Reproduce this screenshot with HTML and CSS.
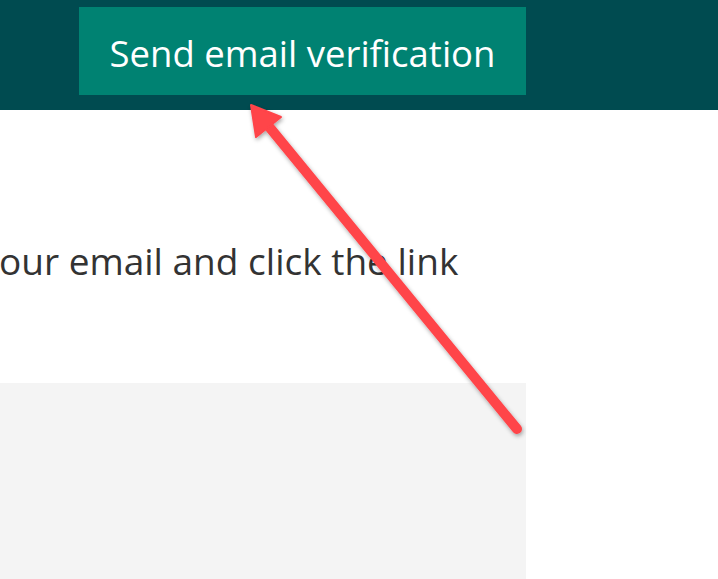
FILE: index.html
```html
<!DOCTYPE html>
<html>
<head>
<meta charset="utf-8">
<link rel="stylesheet" href="styles.css">
</head>
<body>
<header class="topbar">
  <button class="verify-btn">Send email verification</button>
</header>
<main class="content">
  <p class="instructions">our email and click the link</p>
  <div class="panel"></div>
</main>
<svg class="arrow" width="718" height="579" viewBox="0 0 718 579">
  <defs>
    <filter id="sh" x="-20%" y="-20%" width="140%" height="140%">
      <feDropShadow dx="1" dy="2" stdDeviation="2" flood-color="#000" flood-opacity="0.35"/>
    </filter>
  </defs>
  <g filter="url(#sh)" fill="#ff4449" stroke="#ff4449">
    <line x1="517" y1="429" x2="266" y2="123" stroke-width="10" stroke-linecap="round"/>
    <polygon points="251,105 256,137 281,117" stroke-width="2" stroke-linejoin="round"/>
  </g>
</svg>
</body>
</html>
```
FILE: styles.css
```css
html, body {
  margin: 0;
  padding: 0;
  background: #ffffff;
  overflow: hidden;
}
body {
  width: 718px;
  height: 579px;
  position: relative;
  font-family: "Open Sans", "Noto Sans", sans-serif;
}
.topbar {
  height: 110px;
  background: #004b50;
  box-sizing: border-box;
  padding: 7px 0 0 79px;
  display: flex;
  align-items: flex-start;
}
.verify-btn {
  width: 447px;
  height: 88px;
  box-sizing: border-box;
  background: #008272;
  color: #ffffff;
  border: none;
  margin: 0;
  padding: 4px 0 0 0;
  font-family: inherit;
  font-size: 36.5px;
  font-weight: 400;
  display: flex;
  align-items: center;
  justify-content: center;
}
.content {
  display: flex;
  flex-direction: column;
}
.instructions {
  margin: 131px 0 0 -1px;
  font-size: 37px;
  line-height: 40px;
  color: #333333;
}
.panel {
  margin-top: 102px;
  width: 526px;
  height: 200px;
  background: #f4f4f4;
}
.arrow {
  position: absolute;
  left: 0;
  top: 0;
  pointer-events: none;
}
```
